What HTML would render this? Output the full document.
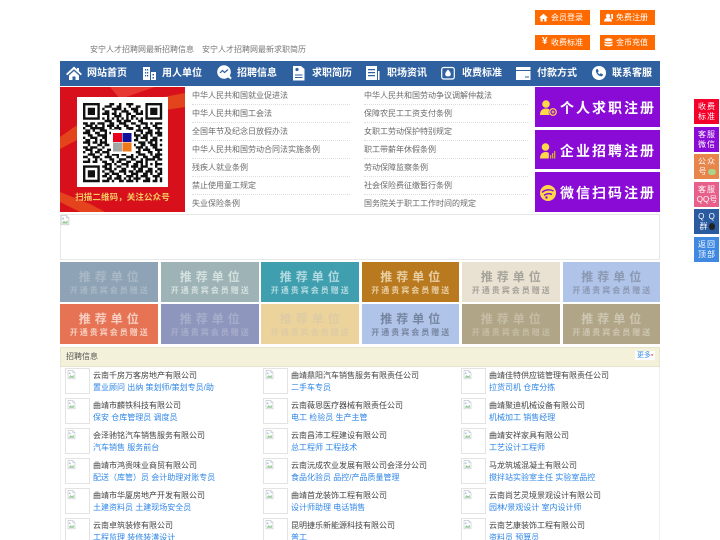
<!DOCTYPE html>
<html lang="zh"><head><meta charset="utf-8"><title>招聘</title>
<style>
html,body{margin:0;padding:0;background:#fff;width:720px;height:540px;overflow:hidden}
#w{position:absolute;left:0;top:0;width:720px;height:540px;overflow:hidden;background:#fff;font-family:"Liberation Sans","Noto Sans CJK SC",sans-serif;font-size:8px;color:#666;filter:blur(.3px)}
.a{position:absolute;white-space:nowrap}
.btn{position:absolute;width:55px;height:15px;background:#ff6a00;color:#fff;line-height:15px;font-size:8px}
.btn span{position:absolute;left:16px;top:0}
.btn svg{position:absolute;left:4px;top:3px}
.nt{position:absolute;top:61px;height:25px;line-height:25px;color:#fff;font-weight:bold;font-size:10px;white-space:nowrap}
.ni{position:absolute}
.l{position:absolute;height:18px;line-height:17px;color:#6a6a6a;border-bottom:1px dotted #ddd;box-sizing:border-box;white-space:nowrap;overflow:hidden}
.p{position:absolute;left:535px;width:125px;background:#8a0bd6;color:#fff;font-weight:bold;font-size:14px;letter-spacing:2px;white-space:nowrap}
.p span{position:absolute;left:25px;top:50%;margin-top:-9px;line-height:20px}
.p svg{position:absolute;left:5px;top:50%;margin-top:-7px}
.t{position:absolute;width:97.5px;height:40px;text-align:center;white-space:nowrap}
.t b{display:block;font-size:12px;letter-spacing:4px;margin-right:-4px;line-height:14px;padding-top:8px;height:14px}
.t i{display:block;font-style:normal;font-size:8px;letter-spacing:2px;margin-right:-2px;line-height:11px;font-weight:bold;margin-top:1px}
.s{position:absolute;left:694px;width:25px;height:25px;color:#fff;font-size:8px;line-height:10px;text-align:center;letter-spacing:1px;white-space:nowrap;padding:3px 0 0 1px;box-sizing:border-box}
.th{position:absolute;width:25px;height:26px;border:1px solid #e3e3e3;box-sizing:border-box;background:#fff}
.th svg{position:absolute;left:1px;top:1px}
.n{position:absolute;color:#444;line-height:12px;white-space:nowrap;font-size:8px}
.j{position:absolute;color:#2f86e6;line-height:12px;white-space:nowrap;font-size:8px}
</style></head><body><div id="w">
<svg width="0" height="0" style="position:absolute"><defs><g id="bk"><path d="M1.500 .5h7l3 3v9h-10z" fill="#fff" stroke="#c4c8d4"/><path d="M8.500 .5v3h3" fill="#e6e8f0" stroke="#c4c8d4"/><path d="M3 10l2-3 2 2 3-2v4H3z" fill="#9c9"/><circle cx="4" cy="4.500" r="1.300" fill="#a8c4e0"/></g></defs></svg>

<div class="a" style="left:90px;top:44px;line-height:12px;color:#777">安宁人才招聘网最新招聘信息</div>
<div class="a" style="left:202px;top:44px;line-height:12px;color:#777">安宁人才招聘网最新求职简历</div>

<div class="btn" style="left:535px;top:10px"><svg width="9" height="9" viewBox="0 0 9 9"><path d="M4.500 .8L0 4.800h1.500V8.500h2.200V6h1.600v2.500h2.200V4.800H9z" fill="#fff"/></svg><span>会员登录</span></div>
<div class="btn" style="left:600px;top:10px"><svg width="10" height="9" viewBox="0 0 10 9"><circle cx="4" cy="3" r="2.200" fill="#fff"/><path d="M0 8.500c0-5 8-5 8 0z" fill="#fff"/><path d="M7 1h2v5H7.500z" fill="#fff"/></svg><span>免费注册</span></div>
<div class="btn" style="left:535px;top:35px"><span style="left:7px;top:-1px;font-size:10px;font-weight:bold">¥</span><span>收费标准</span></div>
<div class="btn" style="left:600px;top:35px"><svg width="9" height="9" viewBox="0 0 9 9" fill="#fff"><ellipse cx="4.500" cy="1.800" rx="4" ry="1.500"/><path d="M.5 3.200c1 1.300 7 1.300 8 0V4.800c-1 1.300-7 1.300-8 0zM.5 5.800c1 1.300 7 1.300 8 0V7.300c-1 1.500-7 1.500-8 0z"/></svg><span>金币充值</span></div>

<div class="a" style="left:60px;top:61px;width:600px;height:25px;background:#2f609f"></div>
<svg class="ni" style="left:66px;top:65px" width="16" height="16" viewBox="0 0 16 16"><path d="M8 1.500L0 9l1.300 1.200L8 4.200l6.700 6L16 9l-3-2.800V3h-2v1.400z" fill="#fff"/><path d="M3 10.500L8 6l5 4.500V15H9.500v-3.500h-3V15H3z" fill="#fff"/></svg>
<svg class="ni" style="left:143px;top:66px" width="13" height="15" viewBox="0 0 13 15"><path d="M0 1h7v13H0zM8 6h5v8H8z" fill="#fff"/><path d="M2 3h1.200v1.500H2zM4 3h1.200v1.500H4zM2 6h1.200v1.500H2zM4 6h1.200v1.500H4zM2 9h1.200v1.500H2zM4 9h1.200v1.500H4zM9.500 8H11v1.500H9.500zM9.500 11H11v1.500H9.500z" fill="#2f609f"/></svg>
<svg class="ni" style="left:217px;top:65px" width="15" height="16" viewBox="0 0 15 16"><circle cx="7" cy="7" r="6.800" fill="#fff"/><path d="M9 11l5 3.500.5-2-3-3z" fill="#fff"/><path d="M3 8l2.500-2.500 2 2L11 4.500" stroke="#2f609f" stroke-width="1.200" fill="none"/></svg>
<svg class="ni" style="left:293px;top:65px" width="12" height="16" viewBox="0 0 12 16"><path d="M0 1h8l3.500 3v11.500H0z" fill="#fff"/><circle cx="4" cy="4.500" r="1.600" fill="#2f609f"/><path d="M2 9.500h7.500v1H2zM2 12h7.500v1H2z" fill="#2f609f"/></svg>
<svg class="ni" style="left:366px;top:66px" width="15" height="14" viewBox="0 0 15 14"><path d="M0 0h11v14H0z" fill="#fff"/><path d="M2 3h7v1.300H2zM2 6h7v1.300H2zM2 9h7v1.300H2z" fill="#2f609f"/><path d="M12 5h1.500v9H12z" fill="#fff"/></svg>
<svg class="ni" style="left:441px;top:65px" width="14" height="15" viewBox="0 0 14 15"><rect x=".7" y="2.500" width="12.600" height="11.500" rx="2" fill="none" stroke="#fff" stroke-width="1.200"/><path d="M7 4.500c1 1 2.800 3 2.800 4.800 0 1.500-1.300 2.200-2.800 2.200s-2.800-.7-2.800-2.200C4.200 7.500 6 5.500 7 4.500z" fill="#fff"/></svg>
<svg class="ni" style="left:516px;top:67px" width="15" height="13" viewBox="0 0 15 13"><path d="M0 0h14.500v3H0zM0 4h14.500v9H0z" fill="#fff"/><path d="M9 9.500h4v1H9z" fill="#2f609f"/></svg>
<svg class="ni" style="left:592px;top:66px" width="14" height="14" viewBox="0 0 14 14"><circle cx="7" cy="7" r="7" fill="#fff"/><path d="M4 3.500l1.700-.5 1 2.300-1 .9c.4 1 1.100 1.700 2.100 2.100l.9-1 2.300 1-.5 1.700c-3 1.500-7.500-3-6.500-6.500z" fill="#2f609f"/></svg>
<div class="nt" style="left:87px">网站首页</div>
<div class="nt" style="left:162px">用人单位</div>
<div class="nt" style="left:237px">招聘信息</div>
<div class="nt" style="left:312px">求职简历</div>
<div class="nt" style="left:387px">职场资讯</div>
<div class="nt" style="left:462px">收费标准</div>
<div class="nt" style="left:537px">付款方式</div>
<div class="nt" style="left:612px">联系客服</div>

<svg class="a" style="left:60px;top:87px" width="125" height="125" viewBox="0 0 125 125">
<rect width="125" height="125" fill="#d8101c"/>
<path d="M0 50L40 22 125 6V20L60 30 0 62z" fill="#e8551c" opacity=".75"/>
<path d="M50 0h45L60 12z" fill="#ee4a3a" opacity=".7"/>
<path d="M0 105l30 12 15 8H20L0 115z" fill="#ea5a20" opacity=".7"/>
<rect x="17" y="10" width="91" height="90" fill="#fff"/>
<g transform="translate(23,16) scale(2.400)">
<path fill="none" stroke="#111" stroke-width="1" d="M0 .5h7M11 .5h2M15 .5h1M18 .5h3M26 .5h7M0 1.500h1M6 1.500h1M9 1.500h3M14 1.500h2M19 1.500h1M22 1.500h2M26 1.500h1M32 1.500h1M0 2.500h1M2 2.500h3M6 2.500h1M8 2.500h1M12 2.500h4M17 2.500h1M20 2.500h3M26 2.500h1M28 2.500h3M32 2.500h1M0 3.500h1M2 3.500h3M6 3.500h1M9 3.500h2M13 3.500h1M16 3.500h3M21 3.500h2M24 3.500h1M26 3.500h1M28 3.500h3M32 3.500h1M0 4.500h1M2 4.500h3M6 4.500h1M8 4.500h3M12 4.500h2M15 4.500h1M18 4.500h2M22 4.500h3M26 4.500h1M28 4.500h3M32 4.500h1M0 5.500h1M6 5.500h1M10 5.500h1M13 5.500h3M18 5.500h1M20 5.500h2M26 5.500h1M32 5.500h1M0 6.500h7M8 6.500h1M10 6.500h1M12 6.500h1M14 6.500h1M16 6.500h1M18 6.500h1M20 6.500h1M22 6.500h1M24 6.500h1M26 6.500h7M9 7.500h3M14 7.500h2M17 7.500h3M23 7.500h2M0 8.500h2M3 8.500h2M6 8.500h3M11 8.500h2M15 8.500h3M20 8.500h2M24 8.500h3M28 8.500h1M30 8.500h3M1 9.500h3M5 9.500h1M8 9.500h1M10 9.500h3M14 9.500h1M17 9.500h2M22 9.500h2M26 9.500h1M29 9.500h2M0 10.500h1M3 10.500h3M6 10.500h3M11 10.500h1M13 10.500h3M18 10.500h3M23 10.500h1M25 10.500h3M30 10.500h3M1 11.500h2M4 11.500h1M7 11.500h3M12 11.500h1M15 11.500h1M19 11.500h2M22 11.500h3M27 11.500h2M31 11.500h1M0 12.500h3M5 12.500h2M9 12.500h1M11 12.500h2M20 12.500h2M24 12.500h1M26 12.500h3M30 12.500h3M2 13.500h2M6 13.500h4M21 13.500h3M25 13.500h2M28 13.500h1M31 13.500h2M0 14.500h1M3 14.500h3M8 14.500h2M22 14.500h1M24 14.500h3M29 14.500h2M1 15.500h2M5 15.500h1M7 15.500h1M9 15.500h1M21 15.500h2M26 15.500h1M28 15.500h3M32 15.500h1M0 16.500h3M4 16.500h2M7 16.500h3M23 16.500h3M27 16.500h2M30 16.500h1M2 17.500h1M6 17.500h2M9 17.500h2M21 17.500h1M24 17.500h2M28 17.500h3M32 17.500h1M0 18.500h2M3 18.500h3M8 18.500h1M22 18.500h3M26 18.500h1M29 18.500h2M1 19.500h3M6 19.500h2M10 19.500h3M15 19.500h2M19 19.500h2M23 19.500h1M25 19.500h3M30 19.500h3M0 20.500h1M3 20.500h1M5 20.500h2M8 20.500h3M13 20.500h1M17 20.500h3M22 20.500h2M27 20.500h2M31 20.500h1M2 21.500h3M7 21.500h1M10 21.500h1M12 21.500h3M16 21.500h2M20 21.500h1M23 21.500h3M28 21.500h1M30 21.500h3M0 22.500h2M4 22.500h3M9 22.500h3M14 22.500h1M18 22.500h3M22 22.500h1M25 22.500h2M29 22.500h3M2 23.500h1M5 23.500h1M7 23.500h1M11 23.500h2M15 23.500h3M20 23.500h2M24 23.500h1M26 23.500h4M31 23.500h2M0 24.500h3M4 24.500h2M8 24.500h2M12 24.500h1M14 24.500h2M18 24.500h2M22 24.500h3M26 24.500h1M30 24.500h1M9 25.500h3M13 25.500h1M16 25.500h3M21 25.500h2M24 25.500h1M26 25.500h1M28 25.500h1M30 25.500h3M0 26.500h7M8 26.500h2M11 26.500h1M14 26.500h2M18 26.500h1M20 26.500h3M24 26.500h3M30 26.500h1M0 27.500h1M6 27.500h1M9 27.500h3M13 27.500h1M16 27.500h2M21 27.500h1M23 27.500h2M27 27.500h2M31 27.500h2M0 28.500h1M2 28.500h3M6 28.500h1M8 28.500h1M11 28.500h2M15 28.500h3M19 28.500h2M22 28.500h3M26 28.500h3M30 28.500h1M32 28.500h1M0 29.500h1M2 29.500h3M6 29.500h1M9 29.500h2M12 29.500h3M17 29.500h1M20 29.500h3M25 29.500h2M28 29.500h1M31 29.500h2M0 30.500h1M2 30.500h3M6 30.500h1M8 30.500h2M11 30.500h1M14 30.500h2M18 30.500h3M22 30.500h1M24 30.500h3M29 30.500h3M0 31.500h1M6 31.500h1M10 31.500h2M13 31.500h3M17 31.500h1M19 31.500h1M21 31.500h3M26 31.500h2M30 31.500h1M32 31.500h1M0 32.500h7M8 32.500h3M12 32.500h1M15 32.500h2M18 32.500h3M22 32.500h1M25 32.500h3M29 32.500h2M32 32.500h1"/>
</g>
<rect x="51" y="43" width="23" height="24" fill="#fff"/>
<rect x="53" y="46" width="9" height="9" fill="#e8001c"/><rect x="62.500" y="46" width="9" height="9" fill="#10109a"/>
<rect x="53" y="55.500" width="9" height="9" fill="#a5a5a5"/><rect x="62.500" y="55.500" width="9" height="9" fill="#f07818"/>
<text x="62.500" y="113" text-anchor="middle" font-family="Liberation Sans,Noto Sans CJK SC,sans-serif" font-size="8.500" font-weight="bold" fill="#f4cc64" letter-spacing=".1">扫描二维码，关注公众号</text>
</svg>

<div class="l" style="left:192px;top:87px;width:158px">中华人民共和国就业促进法</div>
<div class="l" style="left:192px;top:105px;width:158px">中华人民共和国工会法</div>
<div class="l" style="left:192px;top:123px;width:158px">全国年节及纪念日放假办法</div>
<div class="l" style="left:192px;top:141px;width:158px">中华人民共和国劳动合同法实施条例</div>
<div class="l" style="left:192px;top:159px;width:158px">残疾人就业条例</div>
<div class="l" style="left:192px;top:177px;width:158px">禁止使用童工规定</div>
<div class="l" style="left:192px;top:195px;width:158px;border:0">失业保险条例</div>
<div class="l" style="left:364px;top:87px;width:164px">中华人民共和国劳动争议调解仲裁法</div>
<div class="l" style="left:364px;top:105px;width:164px">保障农民工工资支付条例</div>
<div class="l" style="left:364px;top:123px;width:164px">女职工劳动保护特别规定</div>
<div class="l" style="left:364px;top:141px;width:164px">职工带薪年休假条例</div>
<div class="l" style="left:364px;top:159px;width:164px">劳动保障监察条例</div>
<div class="l" style="left:364px;top:177px;width:164px">社会保险费征缴暂行条例</div>
<div class="l" style="left:364px;top:195px;width:164px;border:0">国务院关于职工工作时间的规定</div>

<div class="p" style="top:87px;height:40px"><svg width="17" height="16" viewBox="0 0 17 16"><circle cx="6" cy="4" r="3.800" fill="#ffd84a"/><path d="M0 15c0-5 3-6.500 6-6.500 1.500 0 2.800.4 3.500 1.200-1.200 1.600-1 3.800.3 5.300z" fill="#ffd84a"/><circle cx="13" cy="12" r="3.300" fill="none" stroke="#ffd84a" stroke-width="1.200"/><path d="M11.500 12h3M13 10.500v3" stroke="#ffd84a"/></svg><span>个人求职注册</span></div>
<div class="p" style="top:130px;height:39px"><svg width="16" height="16" viewBox="0 0 16 16"><circle cx="5.500" cy="4" r="3.800" fill="#ffd84a"/><path d="M0 15.500c0-5 3-6.500 5.500-6.500 1.500 0 2.500.3 3.300 1v5.500z" fill="#ffd84a"/><path d="M10 12h1.300v3.500H10zM12 10h1.300v5.500H12zM14 8h1.300v7.500H14z" fill="#d8a83a"/></svg><span>企业招聘注册</span></div>
<div class="p" style="top:172px;height:40px"><svg width="16" height="16" viewBox="0 0 16 16"><circle cx="8" cy="8" r="8" fill="#ffd84a"/><path d="M2 7.500C5 4.500 10 4 13.500 6M4 10.500c2.500-2 5.500-2.300 8-1" fill="none" stroke="#8a0bd6" stroke-width="1.400"/><circle cx="6.500" cy="12.500" r="1.200" fill="#8a0bd6"/></svg><span>微信扫码注册</span></div>

<div class="a" style="left:60px;top:214px;width:600px;height:46px;border:1px solid #e8e8e8;box-sizing:border-box"><svg style="position:absolute;left:-1px;top:0" width="10" height="11" viewBox="0 0 13 14"><use href="#bk"/></svg></div>

<div class="t" style="left:60px;top:262px;background:#8ea3b5;color:#a9b9c6"><b>推荐单位</b><i>开通贵宾会员赠送</i></div>
<div class="t" style="left:161px;top:262px;background:#9db3b5;color:#d5e0e0"><b>推荐单位</b><i>开通贵宾会员赠送</i></div>
<div class="t" style="left:261px;top:262px;background:#3f9faf;color:#b3dae0"><b>推荐单位</b><i>开通贵宾会员赠送</i></div>
<div class="t" style="left:361.500px;top:262px;background:#b97a1f;color:#e8cfa5"><b>推荐单位</b><i>开通贵宾会员赠送</i></div>
<div class="t" style="left:462px;top:262px;background:#e9e2d2;color:#a5a29a"><b>推荐单位</b><i>开通贵宾会员赠送</i></div>
<div class="t" style="left:562.500px;top:262px;background:#b0c3e8;color:#8a98b2"><b>推荐单位</b><i>开通贵宾会员赠送</i></div>
<div class="t" style="left:60px;top:304px;background:#e67353;color:#f6cfc2"><b>推荐单位</b><i>开通贵宾会员赠送</i></div>
<div class="t" style="left:161px;top:304px;background:#8f96bd;color:#a7aeca"><b>推荐单位</b><i>开通贵宾会员赠送</i></div>
<div class="t" style="left:261px;top:304px;background:#ecd39c;color:#dccba3"><b>推荐单位</b><i>开通贵宾会员赠送</i></div>
<div class="t" style="left:361.500px;top:304px;background:#b0c3e8;color:#76859f"><b>推荐单位</b><i>开通贵宾会员赠送</i></div>
<div class="t" style="left:462px;top:304px;background:#b0a586;color:#c5bda6"><b>推荐单位</b><i>开通贵宾会员赠送</i></div>
<div class="t" style="left:562.500px;top:304px;background:#b0a586;color:#cdc6b2"><b>推荐单位</b><i>开通贵宾会员赠送</i></div>

<div class="a" style="left:60px;top:347px;width:600px;height:200px;border:1px solid #eee;box-sizing:border-box"></div>
<div class="a" style="left:60px;top:347px;width:600px;height:20px;background:#f3f1da;border:1px solid #e6e4cc;box-sizing:border-box;line-height:17px;padding-left:5px;color:#555">招聘信息</div>
<div class="a" style="left:635px;top:351px;width:20px;height:9px;background:#fff;color:#3a8ee6;font-size:7px;line-height:9px;padding-left:2px;box-sizing:border-box">更多<span style="color:#e66">▪</span></div>

<div class="th" style="left:65px;top:368px"><svg width="9" height="10" viewBox="0 0 13 14"><use href="#bk"/></svg></div><div class="n" style="left:93px;top:370px">云南千房万客房地产有限公司</div><div class="j" style="left:93px;top:382px">置业顾问 出纳 策划师/策划专员/助</div>
<div class="th" style="left:263px;top:368px"><svg width="9" height="10" viewBox="0 0 13 14"><use href="#bk"/></svg></div><div class="n" style="left:291px;top:370px">曲靖鼎阳汽车销售服务有限责任公司</div><div class="j" style="left:291px;top:382px">二手车专员</div>
<div class="th" style="left:461px;top:368px"><svg width="9" height="10" viewBox="0 0 13 14"><use href="#bk"/></svg></div><div class="n" style="left:489px;top:370px">曲靖佳特供应链管理有限责任公司</div><div class="j" style="left:489px;top:382px">拉货司机 仓库分拣</div>

<div class="th" style="left:65px;top:398px"><svg width="9" height="10" viewBox="0 0 13 14"><use href="#bk"/></svg></div><div class="n" style="left:93px;top:400px">曲靖市麟铁科技有限公司</div><div class="j" style="left:93px;top:412px">保安 仓库管理员 调度员</div>
<div class="th" style="left:263px;top:398px"><svg width="9" height="10" viewBox="0 0 13 14"><use href="#bk"/></svg></div><div class="n" style="left:291px;top:400px">云南薇恩医疗器械有限责任公司</div><div class="j" style="left:291px;top:412px">电工 检验员 生产主管</div>
<div class="th" style="left:461px;top:398px"><svg width="9" height="10" viewBox="0 0 13 14"><use href="#bk"/></svg></div><div class="n" style="left:489px;top:400px">曲靖聚迪机械设备有限公司</div><div class="j" style="left:489px;top:412px">机械加工 销售经理</div>

<div class="th" style="left:65px;top:428px"><svg width="9" height="10" viewBox="0 0 13 14"><use href="#bk"/></svg></div><div class="n" style="left:93px;top:430px">会泽驰铭汽车销售服务有限公司</div><div class="j" style="left:93px;top:442px">汽车销售 服务前台</div>
<div class="th" style="left:263px;top:428px"><svg width="9" height="10" viewBox="0 0 13 14"><use href="#bk"/></svg></div><div class="n" style="left:291px;top:430px">云南昌沛工程建设有限公司</div><div class="j" style="left:291px;top:442px">总工程师 工程技术</div>
<div class="th" style="left:461px;top:428px"><svg width="9" height="10" viewBox="0 0 13 14"><use href="#bk"/></svg></div><div class="n" style="left:489px;top:430px">曲靖安祥家具有限公司</div><div class="j" style="left:489px;top:442px">工艺设计工程师</div>

<div class="th" style="left:65px;top:458px"><svg width="9" height="10" viewBox="0 0 13 14"><use href="#bk"/></svg></div><div class="n" style="left:93px;top:460px">曲靖市鸿贵味业商贸有限公司</div><div class="j" style="left:93px;top:472px">配送（库管）员 会计助理对账专员</div>
<div class="th" style="left:263px;top:458px"><svg width="9" height="10" viewBox="0 0 13 14"><use href="#bk"/></svg></div><div class="n" style="left:291px;top:460px">云南沅成农业发展有限公司会泽分公司</div><div class="j" style="left:291px;top:472px">食品化验员 品控/产品质量管理</div>
<div class="th" style="left:461px;top:458px"><svg width="9" height="10" viewBox="0 0 13 14"><use href="#bk"/></svg></div><div class="n" style="left:489px;top:460px">马龙筑城混凝土有限公司</div><div class="j" style="left:489px;top:472px">搅拌站实验室主任 实验室品控</div>

<div class="th" style="left:65px;top:488px"><svg width="9" height="10" viewBox="0 0 13 14"><use href="#bk"/></svg></div><div class="n" style="left:93px;top:490px">曲靖市华厦房地产开发有限公司</div><div class="j" style="left:93px;top:502px">土建资料员 土建现场安全员</div>
<div class="th" style="left:263px;top:488px"><svg width="9" height="10" viewBox="0 0 13 14"><use href="#bk"/></svg></div><div class="n" style="left:291px;top:490px">曲靖首龙装饰工程有限公司</div><div class="j" style="left:291px;top:502px">设计师助理 电话销售</div>
<div class="th" style="left:461px;top:488px"><svg width="9" height="10" viewBox="0 0 13 14"><use href="#bk"/></svg></div><div class="n" style="left:489px;top:490px">云南尚艺灵境景观设计有限公司</div><div class="j" style="left:489px;top:502px">园林/景观设计 室内设计师</div>

<div class="th" style="left:65px;top:518px"><svg width="9" height="10" viewBox="0 0 13 14"><use href="#bk"/></svg></div><div class="n" style="left:93px;top:520px">云南卓筑装修有限公司</div><div class="j" style="left:93px;top:532px">工程监理 装修装潢设计</div>
<div class="th" style="left:263px;top:518px"><svg width="9" height="10" viewBox="0 0 13 14"><use href="#bk"/></svg></div><div class="n" style="left:291px;top:520px">昆明捷乐新能源科技有限公司</div><div class="j" style="left:291px;top:532px">普工</div>
<div class="th" style="left:461px;top:518px"><svg width="9" height="10" viewBox="0 0 13 14"><use href="#bk"/></svg></div><div class="n" style="left:489px;top:520px">云南艺康装饰工程有限公司</div><div class="j" style="left:489px;top:532px">资料员 预算员</div>

<div class="s" style="top:99px;background:#f4002a">收费<br>标准</div>
<div class="s" style="top:126.500px;background:#8a0bd6">客服<br>微信</div>
<div class="s" style="top:154px;background:#e8854a">公众<br>号<span style="display:inline-block;width:8px;height:6px;border-radius:3px;background:#a9d48a;vertical-align:-1px"></span></div>
<div class="s" style="top:181.500px;background:#e8608a">客服<br><span style="letter-spacing:0">QQ号</span></div>
<div class="s" style="top:209px;background:#2a5aa0">Q Q<br>群<span style="display:inline-block;width:6px;height:7px;border-radius:3px;background:#222;vertical-align:-1px"></span></div>
<div class="s" style="top:236.500px;background:#3f8ae0">返回<br>顶部</div>
</div></body></html>
